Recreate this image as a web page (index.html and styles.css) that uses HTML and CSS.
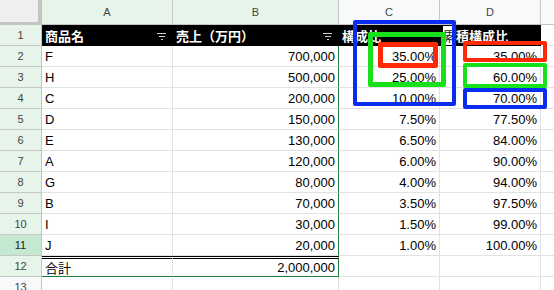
FILE: index.html
```html
<!DOCTYPE html>
<html lang="ja">
<head>
<meta charset="utf-8">
<link rel="stylesheet" href="styles.css">
</head>
<body>
<div class="wrap">
  <div class="sheet">
    <div class="corner"></div>
    <div class="ch sel">A</div><div class="ch sel">B</div><div class="ch">C</div><div class="ch">D</div><div class="ch"></div>

    <div class="rh sel">1</div>
    <div class="c hd">商品名<span class="filter"><i></i><i></i><i></i></span></div>
    <div class="c hd">売上（万円）<span class="filter"><i></i><i></i><i></i></span></div>
    <div class="c hd">構成比</div>
    <div class="c hd"><span class="inv">累</span>積構成比</div>
    <div class="c"></div>

    <div class="rh sel">2</div><div class="c">F</div><div class="c num sr">700,000</div><div class="c num">35.00%</div><div class="c num">35.00%</div><div class="c"></div>
    <div class="rh sel">3</div><div class="c">H</div><div class="c num sr">500,000</div><div class="c num">25.00%</div><div class="c num">60.00%</div><div class="c"></div>
    <div class="rh sel">4</div><div class="c">C</div><div class="c num sr">200,000</div><div class="c num">10.00%</div><div class="c num">70.00%</div><div class="c"></div>
    <div class="rh sel">5</div><div class="c">D</div><div class="c num sr">150,000</div><div class="c num">7.50%</div><div class="c num">77.50%</div><div class="c"></div>
    <div class="rh sel">6</div><div class="c">E</div><div class="c num sr">130,000</div><div class="c num">6.50%</div><div class="c num">84.00%</div><div class="c"></div>
    <div class="rh sel">7</div><div class="c">A</div><div class="c num sr">120,000</div><div class="c num">6.00%</div><div class="c num">90.00%</div><div class="c"></div>
    <div class="rh sel">8</div><div class="c">G</div><div class="c num sr">80,000</div><div class="c num">4.00%</div><div class="c num">94.00%</div><div class="c"></div>
    <div class="rh sel">9</div><div class="c">B</div><div class="c num sr">70,000</div><div class="c num">3.50%</div><div class="c num">97.50%</div><div class="c"></div>
    <div class="rh sel">10</div><div class="c">I</div><div class="c num sr">30,000</div><div class="c num">1.50%</div><div class="c num">99.00%</div><div class="c"></div>
    <div class="rh act">11</div><div class="c">J</div><div class="c num sr">20,000</div><div class="c num">1.00%</div><div class="c num">100.00%</div><div class="c"></div>
    <div class="rh sel">12</div><div class="c tot sb">合計</div><div class="c num tot sb sr">2,000,000</div><div class="c"></div><div class="c"></div><div class="c"></div>
    <div class="rh">13</div><div class="c"></div><div class="c"></div><div class="c"></div><div class="c"></div><div class="c"></div>
  </div>

  <div class="mark blue b1"></div>
  <div class="mark green g1"></div>
  <div class="mark red r1"></div>
  <div class="mark red r2"></div>
  <div class="mark green g2"></div>
  <div class="mark blue b2"></div>
</div>
</body>
</html>
```

FILE: styles.css
```css
html, body {
  margin: 0;
  padding: 0;
  background: #ffffff;
  overflow: hidden;
}
.wrap {
  position: relative;
  width: 554px;
  height: 290px;
  overflow: hidden;
}
.sheet {
  display: grid;
  grid-template-columns: 42px 131px 166px 101px 101px 100px;
  grid-template-rows: 25px repeat(13, 21px);
  font-family: "Liberation Sans", Arial, "Noto Sans CJK JP", sans-serif;
  font-size: 13px;
  color: #000;
}
.corner {
  background: #efefef;
  border-right: 4px solid #c4c4c4;
  border-bottom: 3px solid #c4c4c4;
  box-sizing: border-box;
}
.ch {
  box-sizing: border-box;
  background: #f8f9fa;
  border-right: 1px solid #c7c7c7;
  border-bottom: 1px solid #c4c4c4;
  display: flex;
  align-items: center;
  justify-content: center;
  font-size: 11px;
  color: #444;
  padding-bottom: 1px;
}
.ch.sel { background: #e6f4ea; }
.rh {
  box-sizing: border-box;
  background: #f8f9fa;
  border-right: 1px solid #c4c4c4;
  border-bottom: 1px solid #c7c7c7;
  display: flex;
  align-items: center;
  justify-content: center;
  font-size: 11px;
  color: #444;
}
.rh.sel { background: #e6f4ea; }
.rh.act { background: #c5e8d0; color: #222; }
.c {
  box-sizing: border-box;
  border-right: 1px solid #e2e2e2;
  border-bottom: 1px solid #e2e2e2;
  display: flex;
  align-items: center;
  padding: 0 3px;
  white-space: nowrap;
  overflow: visible;
  position: relative;
}
.num { justify-content: flex-end; }
.hd {
  background: #000;
  color: #fff;
  font-family: "Noto Sans CJK JP", sans-serif;
  font-weight: 700;
  font-size: 13px;
  border-color: #000;
  padding-top: 1px;
}
.inv {
  background: #fff;
  color: #222;
  font-weight: 400;
}
.filter {
  position: absolute;
  right: 6px;
  top: 8px;
  width: 9px;
  display: flex;
  flex-direction: column;
  align-items: center;
  gap: 2px;
}
.filter i {
  display: block;
  height: 1px;
  background: #cfcfcf;
}
.filter i:nth-child(1) { width: 9px; }
.filter i:nth-child(2) { width: 6px; }
.filter i:nth-child(3) { width: 2px; }
.sr { border-right-color: #1e7e34; }
.sb { border-bottom-color: #1e7e34; }
.tot {
  border-top: 3px double #000;
  font-family: "Liberation Sans", "Noto Sans CJK JP", sans-serif;
}

.mark {
  position: absolute;
  box-sizing: border-box;
  border-radius: 2px;
}
.blue { border: 4px solid #0a2cf0; }
.green { border: 4px solid #18e01a; }
.red { border: 5px solid #ff2a05; }
.b1 { left: 353px; top: 20px; width: 103px; height: 86px; }
.g1 { left: 368px; top: 32px; width: 78px; height: 55px; border-width: 5px; }
.r1 { left: 378px; top: 42px; width: 60px; height: 26px; }
.r2 { left: 463px; top: 41px; width: 84px; height: 21px; border-width: 4px; }
.g2 { left: 463px; top: 63px; width: 84px; height: 25px; }
.b2 { left: 463px; top: 88px; width: 84px; height: 21px; }
```
